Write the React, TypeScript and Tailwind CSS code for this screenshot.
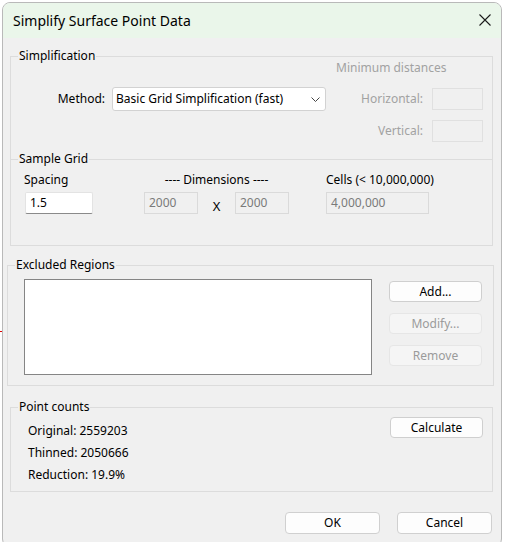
function GroupBox({ label, className, children }: { label: string; className: string; children: React.ReactNode }) {
  return (
    <div className={"relative border border-[#dcdcdc] " + className}>
      <span className="absolute left-[7px] -top-[9px] bg-[#f0f0f0] px-[1px] leading-[16px]">{label}</span>
      {children}
    </div>
  );
}

function Btn({ label, disabled }: { label: string; disabled?: boolean }) {
  return disabled ? (
    <div className="flex h-[21px] w-[93px] items-center justify-center rounded-[4px] border border-[#e6e6e6] bg-[#f5f5f5] text-[#9b9b9b]">
      {label}
    </div>
  ) : (
    <div className="flex h-[21px] w-[93px] items-center justify-center rounded-[4px] border border-[#cfcfcf] bg-[#fdfdfd]">
      {label}
    </div>
  );
}

function DisabledBox({ value, className }: { value: string; className: string }) {
  return (
    <div className={"flex h-[22px] items-center border border-[#dadada] bg-[#f0f0f0] pl-[4px] text-[#7a7a7a] " + className}>
      {value}
    </div>
  );
}

export default function App() {
  return (
    <div className="relative h-[542px] w-[505px] overflow-hidden bg-white font-['Noto_Sans',sans-serif] text-[12px] leading-[16px] text-black">
      <div className="absolute left-0 top-[331px] h-[1px] w-[2px] bg-[#e00000]" />

      <div className="ml-[2px] mt-[2px] h-[545px] w-[500px] overflow-hidden rounded-[8px] border border-[#b9b9b9] bg-[#f0f0f0]">
        {/* Title bar */}
        <div className="flex h-[35px] items-center justify-between bg-[#eaf6ea] pl-[10px] pr-[10px]">
          <span className="text-[14px] leading-[20px]">Simplify Surface Point Data</span>
          <svg width="12" height="12" viewBox="0 0 12 12" className="mt-[-1px]">
            <path d="M0.5 0.5 L11.5 11.5 M11.5 0.5 L0.5 11.5" stroke="#1b1b1b" strokeWidth="1.1" fill="none" />
          </svg>
        </div>

        {/* Simplification + Sample Grid */}
        <GroupBox label="Simplification" className="ml-[7px] mt-[18px] h-[190px] w-[483px]">
          <div className="flex h-[102px]">
            <div className="ml-[29px] mt-[30px] flex h-[24px] items-center">
              <span className="w-[65px] text-right">Method:</span>
              <div className="ml-[7px] flex h-[24px] w-[214px] items-center justify-between rounded-[3px] border border-[#d2d2d2] bg-white pl-[3px] pr-[5px]">
                <span>Basic Grid Simplification (fast)</span>
                <svg width="9" height="5" viewBox="0 0 9 5">
                  <path d="M0.5 0.5 L4.5 4.5 L8.5 0.5" stroke="#444" strokeWidth="1" fill="none" />
                </svg>
              </div>
            </div>
            <div className="ml-auto mr-[9px] flex w-[147px] flex-col text-[#a2a2a2]">
              <span className="mt-[3px]">Minimum distances</span>
              <div className="mt-[12px] flex items-center justify-end gap-[9px]">
                <span>Horizontal:</span>
                <div className="h-[22px] w-[51px] border border-[#e0e0e0] bg-[#f0f0f0]" />
              </div>
              <div className="mt-[10px] flex items-center justify-end gap-[9px]">
                <span>Vertical:</span>
                <div className="h-[22px] w-[51px] border border-[#e0e0e0] bg-[#f0f0f0]" />
              </div>
            </div>
          </div>

          <div className="relative border-t border-[#dcdcdc]">
            <span className="absolute left-[7px] -top-[9px] bg-[#f0f0f0] px-[1px]">Sample Grid</span>
            <div className="mt-[12px] flex h-[16px]">
              <span className="ml-[13px] w-[120px]">Spacing</span>
              <span className="w-[145px] text-center">---- Dimensions ----</span>
              <span className="ml-[37px]">Cells (&lt; 10,000,000)</span>
            </div>
            <div className="mt-[4px] flex">
              <div className="ml-[14px] flex h-[22px] w-[68px] items-center rounded-[2px] border border-[#e3e3e3] border-b-[#8a8a8a] bg-white pl-[4px]">
                1.5
              </div>
              <DisabledBox value="2000" className="ml-[51px] w-[54px]" />
              <div className="flex h-[22px] w-[37px] items-end justify-center text-[13px] leading-[16px]">X</div>
              <DisabledBox value="2000" className="w-[54px]" />
              <DisabledBox value="4,000,000" className="ml-[37px] w-[103px] text-[#6f6f6f]" />
            </div>
          </div>
        </GroupBox>

        {/* Excluded Regions */}
        <GroupBox label="Excluded Regions" className="ml-[4px] mt-[19px] h-[121px] w-[487px]">
          <div className="flex items-start">
            <div className="ml-[16px] mt-[13px] h-[96px] w-[348px] border border-[#858585] bg-white" />
            <div className="ml-[17px] mt-[15px] flex flex-col gap-[11px]">
              <Btn label="Add..." />
              <Btn label="Modify..." disabled />
              <Btn label="Remove" disabled />
            </div>
          </div>
        </GroupBox>

        {/* Point counts */}
        <GroupBox label="Point counts" className="ml-[7px] mt-[21px] h-[85px] w-[483px]">
          <div className="flex items-start">
            <div className="ml-[17px] mt-[12px] flex flex-col leading-[22px]">
              <span>Original: 2559203</span>
              <span>Thinned: 2050666</span>
              <span>Reduction: 19.9%</span>
            </div>
            <div className="ml-auto mr-[9px] mt-[9px]">
              <Btn label="Calculate" />
            </div>
          </div>
        </GroupBox>

        {/* Footer */}
        <div className="mt-[20px] flex justify-end gap-[17px] pr-[9px]">
          <div className="flex h-[22px] w-[95px] items-center justify-center rounded-[4px] border border-[#d0d0d0] bg-[#fdfdfd]">OK</div>
          <div className="flex h-[22px] w-[95px] items-center justify-center rounded-[4px] border border-[#d0d0d0] bg-[#fdfdfd]">Cancel</div>
        </div>
      </div>
    </div>
  );
}
